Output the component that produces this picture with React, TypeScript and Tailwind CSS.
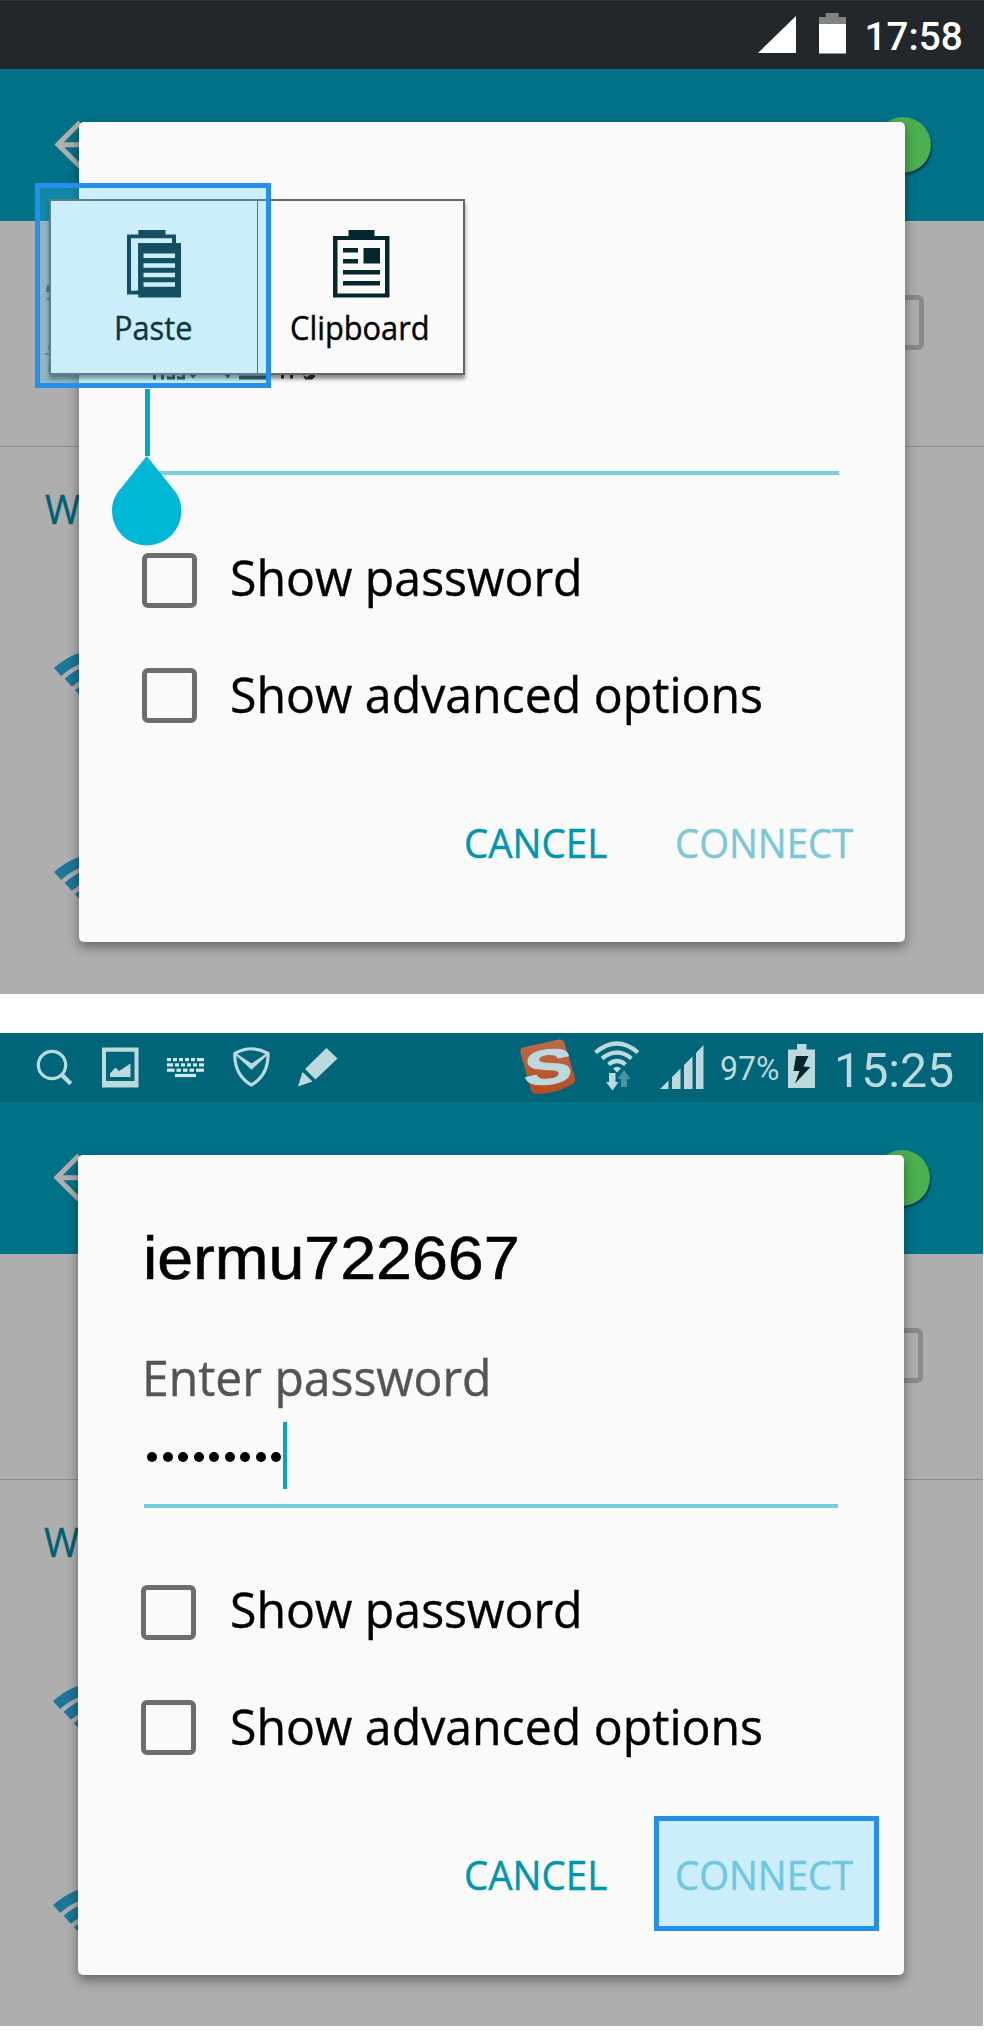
import React from "react";

const SANS = "font-['Open_Sans','Noto_Sans',sans-serif]";

function Label({ className, children }: { className: string; children: React.ReactNode }) {
  return (
    <span className={`block origin-left whitespace-nowrap [-webkit-text-stroke:0.4px_currentColor] ${SANS} ${className}`}>
      {children}
    </span>
  );
}

function BackArrow() {
  return (
    <svg className="mt-[48px] block h-[56px] w-[50px]" viewBox="54 117 50 56">
      <path d="M80 122.5 58 144.5 80 166.5M58 144.8H104" fill="none" stroke="#b3aeae" strokeWidth="5" />
    </svg>
  );
}

function WifiGlyph() {
  return (
    <svg className="block h-[74px] w-[100px]" viewBox="54 649 100 74" fill="none" stroke="#1c7799">
      <path d="M57.6 672A68.7 68.7 0 0 1 150 672" strokeWidth="10.6" />
      <path d="M68.2 682.8A53.6 53.6 0 0 1 139.5 682.8" strokeWidth="10.8" />
      <path d="M78.5 694A38.4 38.4 0 0 1 129 694" strokeWidth="10.8" />
    </svg>
  );
}

function Backdrop({ status, fragments }: { status: React.ReactNode; fragments?: React.ReactNode }) {
  return (
    <>
      {status}
      <div className="flex h-[152px] items-start justify-between bg-[#007288] pl-[54px] pr-[53px]">
        <BackArrow />
        <div className="mt-[47.5px] h-[56px] w-[56px] rounded-full bg-[#4caf50] shadow-[1px_2px_2px_rgba(0,30,60,0.7)]" />
      </div>
      <div className="flex h-[226px] justify-between border-b border-[#8b8b8b] border-t border-t-[#b9b3b3] pl-[45px] pr-[60px]">
        <div>{fragments}</div>
        <div className="mt-[73px] h-[55px] w-[55px] rounded-[6px] border-[5px] border-[#8a8a8a]" />
      </div>
      <div className="pl-[45px]">
        <Label className="mt-[31px] scale-x-[0.93] text-[41px] leading-[60px] text-[#005f75]">WLAN</Label>
      </div>
      <div className="flex flex-col gap-[130px] pl-[54px] pt-[111px]">
        <WifiGlyph />
        <WifiGlyph />
      </div>
    </>
  );
}

function Option({ text, wide, lead }: { text: string; wide: boolean; lead: string }) {
  return (
    <div className={`flex h-[54px] items-start ${wide ? "gap-[34px]" : "gap-[33px]"}`}>
      <div className="h-[54.5px] w-[54.5px] shrink-0 rounded-[6px] border-[5px] border-[#6d6d6d]" />
      <Label className={`scale-x-[0.964] text-[50px] text-black ${lead}`}>{text}</Label>
    </div>
  );
}

function Dialog({
  children,
  className,
  cancelPad,
  active,
}: {
  children: React.ReactNode;
  className: string;
  cancelPad: string;
  active: boolean;
}) {
  return (
    <div
      className={`absolute top-[122px] h-[820px] w-[826px] rounded-[5px] bg-[#fafafa] shadow-[0_5px_12px_rgba(0,0,0,0.42)] ${className}`}
    >
      {children}
      <div className="flex flex-col gap-[61px] pl-[63px]">
        <Option text="Show password" wide={active} lead="leading-[49px]" />
        <Option text="Show advanced options" wide={active} lead="leading-[52px]" />
      </div>
      <div className={`flex pt-[62px] ${cancelPad}`}>
        <div className="w-[190px]">
          <Label className="scale-x-[0.962] text-[40px] leading-[118px] text-[#0096b0]">CANCEL</Label>
        </div>
        <div
          className={`h-[115px] w-[225px] border-[5px] pl-[16px] ${
            active ? "border-[#2590eb] bg-[#cceefa]" : "border-transparent"
          }`}
        >
          <Label
            className={`scale-x-[0.958] text-[40px] leading-[108px] ${active ? "text-[#6ec8df]" : "text-[#7cc8d6]"}`}
          >
            CONNECT
          </Label>
        </div>
      </div>
    </div>
  );
}

function StatusDark() {
  return (
    <div className="flex h-[69px] items-start border-t border-[#30373b] bg-[#22272b] pl-[758px]">
      <svg className="mt-[15px] block h-[38px] w-[38px]" viewBox="0 0 38 38">
        <path d="M0 37 38 0V37Z" fill="#fff" />
      </svg>
      <svg className="ml-[23px] mt-[12px] block h-[41px] w-[27px]" viewBox="0 0 27 41">
        <path d="M0 4H6.7V0H19.7V4H27V11H0Z" fill="#818385" />
        <path d="M0 11H27V40.5H0Z" fill="#fff" />
      </svg>
      <span className="ml-[18.5px] block whitespace-nowrap font-['Roboto',sans-serif] text-[38.7px] font-medium leading-[71px] text-white">
        17:58
      </span>
    </div>
  );
}

const keys: [number, number, number][] = [
  [0, 0, 4], [6, 0, 4], [12, 0, 4], [18, 0, 4], [24, 0, 4], [30, 0, 7],
  [0, 5.3, 6], [8, 5.3, 4], [14, 5.3, 4], [20, 5.3, 4], [26, 5.3, 4], [32, 5.3, 5],
  [0, 10.6, 7.5], [9.5, 10.6, 4.5], [16, 10.6, 4.5], [22.5, 10.6, 4.5], [29, 10.6, 8],
  [8, 15.9, 21],
];

function StatusTeal() {
  return (
    <div className="flex h-[69px] items-start bg-[#006579] pl-[36px] text-[#bcd9de]">
      <svg className="mt-[16px] block h-[38px] w-[38px]" viewBox="36 16 38 38" fill="none" stroke="currentColor">
        <circle cx="52" cy="32" r="13.7" strokeWidth="3.2" />
        <path d="M61.5 41.5 70.8 50.8" strokeWidth="4.4" />
      </svg>
      <svg className="ml-[28px] mt-[14px] block h-[41px] w-[37px]" viewBox="102 14 37 41">
        <path d="M102 14.5H138.5V54.5H102ZM106 18.7V48H134.5V18.7Z" fill="currentColor" fillRule="evenodd" />
        <path d="M110 44V40.5L115.5 34.5 119 38 130.5 30.5V44Z" fill="currentColor" />
      </svg>
      <svg className="ml-[28px] mt-[25px] block h-[20px] w-[37px]" viewBox="0 0 37 20">
        {keys.map(([x, y, w]) => (
          <rect key={`${x}-${y}`} x={x} y={y} width={w} height="3.2" fill="#d3e8eb" />
        ))}
      </svg>
      <svg
        className="ml-[28px] mt-[14px] block h-[41px] w-[38px]"
        viewBox="232 14 38 41"
        fill="none"
        stroke="currentColor"
        strokeWidth="3.2"
        strokeLinejoin="round"
      >
        <path d="M234.8 20.5Q251.3 11 268 20.5Q268.5 42 251.3 52Q234.3 42 234.8 20.5Z" />
        <path d="M236.5 21.5 251.5 35.5 266.5 21.5 251.5 31.5Z" fill="currentColor" strokeWidth="1.8" />
      </svg>
      <svg className="ml-[27px] mt-[14px] block h-[41px] w-[42px]" viewBox="297 14 42 41" fill="currentColor">
        <path d="M326.5 15 337.5 25.5 315.5 46.5 305 36Z" />
        <path d="M302.5 39 312.5 48.5 298 53.5Z" />
      </svg>
      <svg className="ml-[180px] mt-[4px] block h-[60px] w-[59px]" viewBox="519 4 59 60">
        <defs>
          <linearGradient id="tile" x1="0" y1="0" x2="0" y2="1">
            <stop offset="0" stopColor="#bd6b49" />
            <stop offset="1" stopColor="#b54d22" />
          </linearGradient>
        </defs>
        <path
          d="M523 14.5 559 6.5Q563 6 564.5 10L575 45Q576 49.5 572 51.5L560 57Q547 61.5 536 61Q532 61 531 57L520.5 20Q519.5 15.5 523 14.5Z"
          fill="url(#tile)"
        />
        <text
          transform="translate(548.2 51) rotate(-6) skewX(-6) scale(1.5 1)"
          textAnchor="middle"
          fontFamily="Liberation Sans"
          fontWeight="700"
          fontSize="49"
          fill="#bcd9de"
          stroke="#bcd9de"
          strokeWidth="1"
        >
          S
        </text>
      </svg>
      <svg className="ml-[15px] mt-[8px] block h-[50px] w-[48px]" viewBox="593 8 48 50" fill="none" stroke="currentColor">
        <path d="M595.5 19.5Q617 1.500 638 19.5" strokeWidth="4.2" />
        <path d="M602 25.5Q617 13.5 631.5 25.5" strokeWidth="4.2" />
        <path d="M608.5 31.5Q617 24.5 625.5 31.5" strokeWidth="4.2" />
        <path d="M613 35.5Q617 32 621 35.5L617 39.5Z" fill="currentColor" stroke="none" />
        <path d="M609 40H615.5V49H618.5L612.5 57.5 606 49H609Z" fill="currentColor" stroke="none" />
        <path d="M624 37 630.5 46H627V54H621V46H617.5Z" fill="#4a93a1" stroke="none" />
      </svg>
      <svg className="ml-[19px] mt-[12px] block h-[44px] w-[44px]" viewBox="661 12 44 44" fill="currentColor">
        <path d="M661 56 669.5 47.5V56ZM673 56V44L681.5 35.5V56ZM685 56V32L693.5 23.5V56ZM697 56V20L704.5 12V56Z" />
      </svg>
      <span className="ml-[15.5px] block w-[68px] origin-left scale-x-[0.985] whitespace-nowrap font-['Roboto',sans-serif] text-[32.5px] leading-[72px]">
        97%
      </span>
      <svg className="mt-[11px] block h-[44px] w-[28px]" viewBox="789 11 28 44">
        <path d="M789 16.5H798V11H807.5V16.5H816V55H789Z" fill="currentColor" />
        <path d="M797 23H809.5L804.5 33.5 811.5 34 796 50.5 800.5 38H794.5Z" fill="#06242e" />
      </svg>
      <span className="ml-[18.5px] block origin-left scale-x-[0.985] whitespace-nowrap font-['Roboto',sans-serif] text-[49px] leading-[75px]">
        15:25
      </span>
    </div>
  );
}

function PasteIcon() {
  return (
    <svg className="block h-[68px] w-[54px]" viewBox="0 0 54 68">
      <path d="M2 6.5H47V14H11V62.5H2Z" fill="none" stroke="#04262f" strokeWidth="4" />
      <path d="M4.2 8.5H45V13H11.2V60.5H4.2Z" fill="#fafafa" />
      <path d="M11.3 0H38.5V8H11.3ZM11.3 13H54V67.5H11.3Z" fill="#04262f" />
      <path d="M16.5 23.5H48V28H16.5ZM16.5 33.2H48V37.7H16.5ZM16.5 42.8H48V47.3H16.5ZM16.5 52.2H48V56.7H16.5Z" fill="#fafafa" />
    </svg>
  );
}

function ClipboardIcon() {
  return (
    <svg className="block h-[68px] w-[57px]" viewBox="0 0 57 68" fill="#04262f">
      <path d="M0 6H15.5V0H41.5V6H56.5V67.5H0ZM4.5 10V63.5H52V10Z" fillRule="evenodd" />
      <path d="M10 18H25V22.5H10ZM10 29H25V33.5H10ZM30.5 18H47V33.5H30.5ZM10 40H47V44.5H10ZM10 51H47V55.5H10Z" />
    </svg>
  );
}

function ContextMenu() {
  return (
    <div className="absolute left-[49px] top-[199px] flex h-[176px] w-[416px] border-2 border-[#666] bg-[#fafafa] shadow-[0_4px_4px_rgba(0,0,0,0.45)]">
      <div className="w-[207px] border-r border-[#5a5a5a] pt-[29px]">
        <div className="pl-[76px]">
          <PasteIcon />
        </div>
        <Label className="ml-[62.5px] mt-[8px] scale-x-[0.96] text-[32px] leading-[44px] text-black">Paste</Label>
      </div>
      <div className="pt-[29px]">
        <div className="pl-[74.5px]">
          <ClipboardIcon />
        </div>
        <Label className="ml-[31.5px] mt-[8px] scale-x-[0.962] text-[32px] leading-[44px] text-black">Clipboard</Label>
      </div>
    </div>
  );
}

export default function App() {
  return (
    <div className="h-[2040px] w-[984px] overflow-hidden bg-white">
      <section className="relative h-[994px] overflow-hidden bg-[#aeaeae]">
        <Backdrop
          status={<StatusDark />}
          fragments={
            <svg className="mt-[60px] block h-[100px] w-[8px]" viewBox="0 0 8 100" fill="#4f4f4f">
              <path d="M2 4 5 2V10H1ZM1 17 5 15V19Z" />
              <path d="M3 62 5 66V68H3ZM0 71H5V73H0ZM4 78H5V90H3Z" fill="#777" />
            </svg>
          }
        />
        <Dialog className="left-[79px]" cancelPad="pl-[385px]" active={false}>
          <div className="h-[349px] pl-[74px] pt-[252px]">
            <svg className="block h-[5.5px] w-[164px]" viewBox="0 0 164 5.5" fill="#333">
              <path d="M0 0H3V5.500H0ZM8 0H11V5.500H8ZM14 2 19 3V0H22V5.500H14ZM24 2 29 3V0H32V5.500H24ZM36 0H44L40 4.500ZM71 0H78L75 4.500ZM86 1.500H114V5.500H86ZM128 0H131V4.500H128ZM137 0H140V4.500H137ZM150 1 154 3 158 0H162V3L159 5.500H152Z" />
            </svg>
          </div>
          <div className="ml-[65px] h-[4px] w-[695px] bg-[#79cfde]" />
          <div className="h-[78px]" />
        </Dialog>
        <ContextMenu />
        <div className="absolute left-[145px] top-[389px] h-[67px] w-[4.5px] bg-[#00a8c6]" />
        <svg className="absolute left-[112px] top-[456px] block h-[90px] w-[70px]" viewBox="0 0 70 90">
          <path
            d="M34.7 0 61.5 33.5C67 40 69.4 47 69.4 55A34.7 34.5 0 0 1 0 55C0 47 2.5 40 8 33.5Z"
            fill="#00b8d6"
          />
        </svg>
        <div className="absolute left-[35px] top-[183px] h-[205px] w-[236px] border-[5px] border-[#2590eb] bg-[rgba(66,205,250,0.25)] bg-clip-padding" />
      </section>

      <section className="relative mt-[39px] h-[993px] w-[983px] overflow-hidden bg-[#aeaeae]">
        <StatusTeal />
        <div className="-ml-px w-[984px]">
          <Backdrop status={null} />
        </div>
        <Dialog className="left-[78px]" cancelPad="pl-[386px]" active>
          <div className="pl-[63.5px] pt-[72px]">
            <span className="ml-[1.5px] block origin-left scale-x-[1.049] whitespace-nowrap font-['Liberation_Sans',Arial,sans-serif] text-[61.5px] leading-[61px] text-black [-webkit-text-stroke:0.6px_currentColor]">
              iermu722667
            </span>
            <Label className="mt-[59px] scale-x-[0.961] text-[50px] leading-[60px] text-[#545454]">Enter password</Label>
            <div className="mt-[15px] flex h-[67px] items-center">
              <div className="ml-[5.5px] flex w-[135.5px] items-center gap-[5.5px] pt-[3px]">
                {Array.from({ length: 9 }, (_, i) => (
                  <i key={i} className="h-[10.5px] w-[10px] shrink-0 rounded-full bg-black" />
                ))}
              </div>
              <div className="h-[66.5px] w-[4.5px] bg-[#00a8c6]" />
            </div>
          </div>
          <div className="ml-[66px] mt-[15px] h-[4px] w-[694px] bg-[#74cddd]" />
          <div className="h-[77px]" />
        </Dialog>
      </section>
    </div>
  );
}
